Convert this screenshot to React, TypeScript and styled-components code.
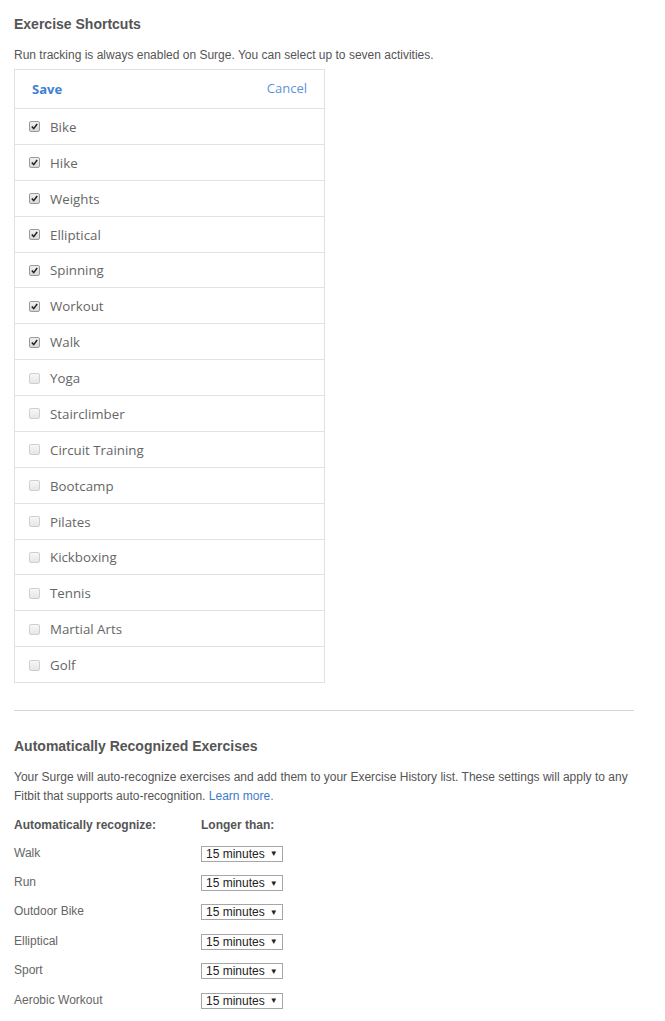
import React from "react";
import styled, { createGlobalStyle } from "styled-components";

const Global = createGlobalStyle`
  html, body { margin: 0; padding: 0; background: #fff; }
  body { font-family: "Liberation Sans", Arial, sans-serif; color: #555; }
`;

const Page = styled.div`
  width: 620px;
  padding: 14px 0 0 14px;
`;

const Heading = styled.h2`
  margin: 0;
  font-size: 14px;
  font-weight: bold;
  color: #555;
  line-height: 20px;
`;

const Desc = styled.p<{ $top: number }>`
  margin: ${(p) => p.$top}px 0 0 0;
  font-size: 12px;
  line-height: 19px;
  color: #555;
`;

const Box = styled.div`
  width: 309px;
  border: 1px solid #e2e2e2;
  margin-top: 4px;
`;

const ActionBar = styled.div`
  height: 38px;
  display: flex;
  align-items: center;
  justify-content: space-between;
  padding: 0 17px 0 17px;
  font-family: "Open Sans", sans-serif;
  font-size: 13px;
`;

const Action = styled.span<{ $primary?: boolean }>`
  color: ${(p) => (p.$primary ? "#3d80d6" : "#5d93dc")};
  font-weight: ${(p) => (p.$primary ? 700 : 400)};
  margin-top: ${(p) => (p.$primary ? "0" : "-2px")};
`;

const Row = styled.label`
  display: flex;
  align-items: center;
  border-top: 1px solid #e2e2e2;
  padding: 1px 0 0 14px;
  box-sizing: border-box;
  height: 35.875px;
  font-family: "Open Sans", sans-serif;
  font-size: 13.3px;
  color: #666;
`;

const Check = styled.span<{ $on: boolean }>`
  width: 9px;
  height: 9px;
  border: 1px solid ${(p) => (p.$on ? "#9a9a9a" : "#cfcfcf")};
  border-radius: 2px;
  background: ${(p) => (p.$on ? "linear-gradient(#f0f0f0, #d8d8d8)" : "linear-gradient(#f7f7f7, #e6e6e6)")};
  margin-right: 10px;
  display: flex;
  align-items: center;
  justify-content: center;
`;

const Divider = styled.hr`
  border: 0;
  border-top: 1px solid #d4d4d4;
  margin: 27px 0 25px 0;
`;

const Link = styled.a`
  color: #3d7cc9;
  text-decoration: none;
`;

const Table = styled.div`
  margin-top: 5px;
  display: grid;
  grid-template-columns: 187px auto;
  grid-template-rows: 27px;
  grid-auto-rows: 29.4px;
  align-items: center;
  font-size: 12px;
`;

const Th = styled.div`
  font-weight: bold;
  color: #555;
`;

const Td = styled.div`
  color: #666;
`;

const Select = styled.div`
  width: 76px;
  height: 14px;
  border: 1px solid #a6a6a6;
  display: flex;
  align-items: center;
  padding-left: 4px;
  box-sizing: content-box;
  font-size: 12px;
  color: #222;
  gap: 5px;
  margin-top: 2px;
  justify-self: start;
`;

const Arrow = styled.span`
  font-size: 8px;
  color: #222;
`;

const items: [string, boolean][] = [
  ["Bike", true],
  ["Hike", true],
  ["Weights", true],
  ["Elliptical", true],
  ["Spinning", true],
  ["Workout", true],
  ["Walk", true],
  ["Yoga", false],
  ["Stairclimber", false],
  ["Circuit Training", false],
  ["Bootcamp", false],
  ["Pilates", false],
  ["Kickboxing", false],
  ["Tennis", false],
  ["Martial Arts", false],
  ["Golf", false],
];

const auto = ["Walk", "Run", "Outdoor Bike", "Elliptical", "Sport", "Aerobic Workout"];

export default function App() {
  return (
    <>
      <Global />
      <Page>
        <Heading>Exercise Shortcuts</Heading>
        <Desc $top={12}>
          Run tracking is always enabled on Surge. You can select up to seven activities.
        </Desc>
        <Box>
          <ActionBar>
            <Action $primary>Save</Action>
            <Action>Cancel</Action>
          </ActionBar>
          {items.map(([name, on]) => (
            <Row key={name}>
              <Check $on={on}>
                {on && (
                  <svg width="7" height="7" viewBox="0 0 7 7">
                    <path d="M0.8 3.6 L2.7 5.6 L6.2 1" fill="none" stroke="#222" strokeWidth="1.5" />
                  </svg>
                )}
              </Check>
              {name}
            </Row>
          ))}
        </Box>
        <Divider />
        <Heading>Automatically Recognized Exercises</Heading>
        <Desc $top={12}>
          Your Surge will auto-recognize exercises and add them to your Exercise History list. These settings will apply to any
          Fitbit that supports auto-recognition. <Link href="#">Learn more.</Link>
        </Desc>
        <Table>
          <Th>Automatically recognize:</Th>
          <Th>Longer than:</Th>
          {auto.map((a) => (
            <React.Fragment key={a}>
              <Td>{a}</Td>
              <Select>
                15 minutes <Arrow>▼</Arrow>
              </Select>
            </React.Fragment>
          ))}
        </Table>
      </Page>
    </>
  );
}
